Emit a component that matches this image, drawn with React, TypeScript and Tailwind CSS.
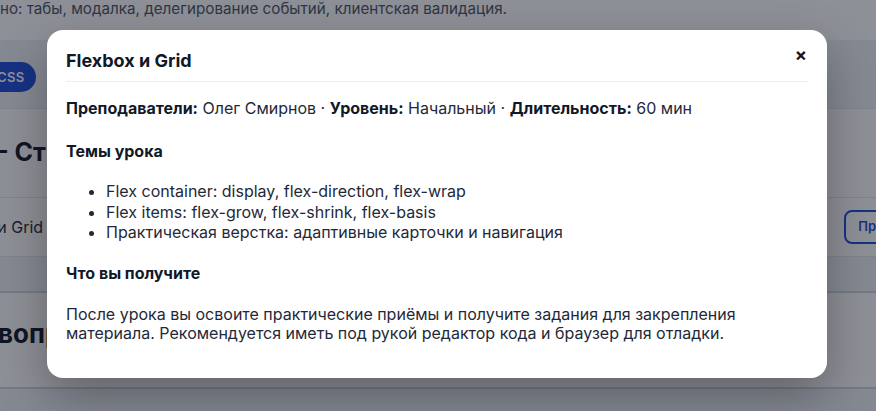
import React from "react";

const topics = [
  "Flex container: display, flex-direction, flex-wrap",
  "Flex items: flex-grow, flex-shrink, flex-basis",
  "Практическая верстка: адаптивные карточки и навигация",
];

function Background() {
  return (
    <div className="h-[411px] w-full overflow-hidden bg-[#eef1f6] text-[#1f2937]">
      <div className="h-[40px] bg-white text-[15.2px] leading-[18px] text-[#4b5563]">
        но: табы, модалка, делегирование событий, клиентская валидация.
      </div>
      <div className="flex h-[68px] items-start gap-2 pt-[22px]">
        <span className="-ml-[15px] rounded-full bg-[#1d4ed8] px-3 py-[6px] text-[13px] font-semibold leading-[18px] tracking-wide text-white">
          CSS
        </span>
      </div>
      <div className="border-y border-[#e5e7eb] bg-white">
        <div className="flex h-[89px] items-center border-b border-[#e5e7eb] text-[25px] font-bold text-[#111827]">
          <span className="-ml-[3px]">- Стили и раскладка</span>
        </div>
        <div className="flex h-[58px] items-center justify-between text-[16px]">
          <span className="-ml-[66px]">Flexbox и Grid</span>
          <span className="mr-[-48px] rounded-lg border-2 border-[#1d4ed8] px-3 py-[5px] text-[13px] font-semibold text-[#1d4ed8]">
            Превью
          </span>
        </div>
      </div>
      <div className="h-[34px]" />
      <div className="h-[98px] border-y-2 border-[#d1d5db] bg-white">
        <div className="flex h-[80px] items-center text-[26px] font-bold text-[#111827]">
          <span className="-ml-[2px]">вопросы</span>
        </div>
      </div>
    </div>
  );
}

export default function App() {
  return (
    <div className="relative h-[411px] w-[876px] overflow-hidden font-['Inter',sans-serif]">
      <Background />
      <div className="absolute inset-0 bg-[rgba(15,20,35,0.47)]" />
      <div className="absolute left-[47px] top-[30px] h-[348px] w-[780px] rounded-2xl bg-white px-[19px] text-[16px] leading-[20px] text-[#1f2937] shadow-[0_20px_50px_rgba(0,0,0,0.3)]">
        <div className="flex items-center justify-between border-b border-[#eceef2] pb-[8px] pt-[19px]">
          <h2 className="text-[18px] font-bold leading-[24px] text-[#111827]">Flexbox и Grid</h2>
          <button className="-mt-[12px] mr-[1px] text-[18px] font-bold leading-[20px] text-[#111827]">×</button>
        </div>
        <p className="mt-[16px]">
          <b className="font-bold text-[#111827]">Преподаватели:</b> Олег Смирнов ·{" "}
          <b className="font-bold text-[#111827]">Уровень:</b> Начальный ·{" "}
          <b className="font-bold text-[#111827]">Длительность:</b> 60 мин
        </p>
        <h3 className="mt-[23px] font-bold text-[#111827]">Темы урока</h3>
        <ul className="mt-[20px] list-disc pl-10 leading-[20.5px]">
          {topics.map((t) => (
            <li key={t}>{t}</li>
          ))}
        </ul>
        <h3 className="mt-[20px] font-bold text-[#111827]">Что вы получите</h3>
        <p className="mt-[22px] leading-[19.5px]">
          После урока вы освоите практические приёмы и получите задания для закрепления
          материала. Рекомендуется иметь под рукой редактор кода и браузер для отладки.
        </p>
      </div>
    </div>
  );
}
